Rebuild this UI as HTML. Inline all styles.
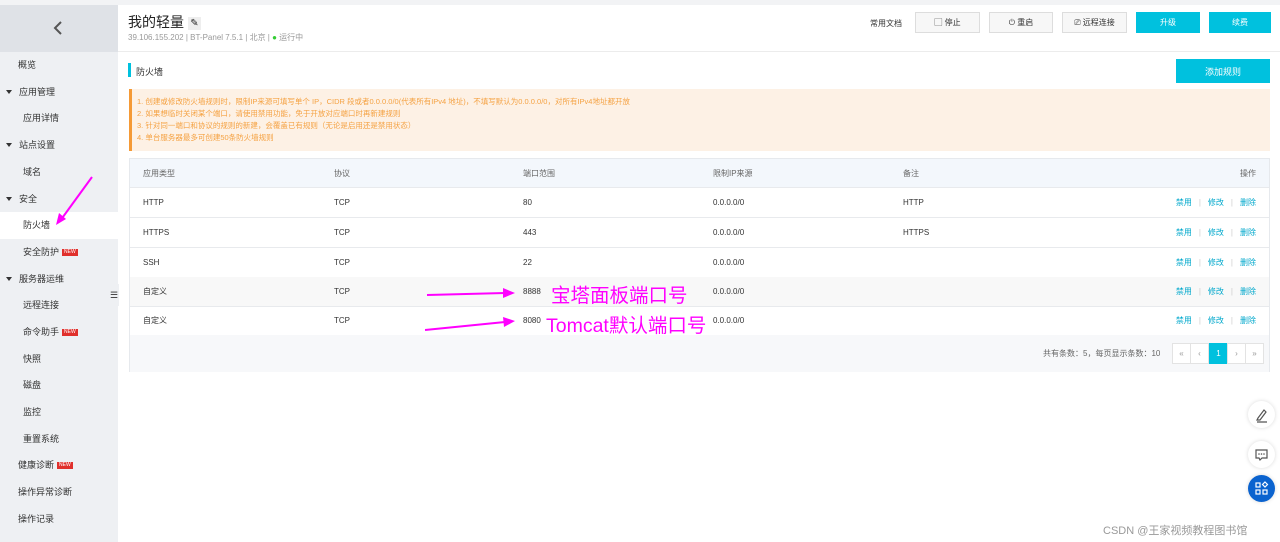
<!DOCTYPE html>
<html><head><meta charset="utf-8"><style>
*{margin:0;padding:0;box-sizing:border-box}
body{width:1280px;height:542px;overflow:hidden;background:#fff;font-family:"Liberation Sans","Noto Sans CJK SC",sans-serif;font-size:9px;color:#333;position:relative}
.a{position:absolute}
.top{left:0;top:0;width:1280px;height:5px;background:#f2f3f5}
.side{left:0;top:5px;width:118px;height:537px;background:#eef0f3}
.sh{left:0;top:5px;width:118px;height:47px;background:#dfe2e7}
.si{position:absolute;left:0;width:118px;height:27px;line-height:27px;font-size:9px;color:#333}
.new{display:inline-block;background:#e0302c;color:#fff;font-size:5px;line-height:7px;padding:0 2px;vertical-align:2px;margin-left:3px}
.tri{display:inline-block;width:0;height:0;border-left:3px solid transparent;border-right:3px solid transparent;border-top:4px solid #333;margin:0 7px 1px 6px}
.btn{top:12px;height:21px;border:1px solid #ddd;background:#f7f7f7;font-size:8px;line-height:19px;text-align:center;color:#333}
.cy{background:#00c1de;border-color:#00c1de;color:#fff}
.tbl{left:129px;top:158px;width:1141px;height:214px;border:1px solid #e6e9ed}
.row{position:absolute;left:0;width:1139px;height:30px;border-bottom:1px solid #e8eaed;font-size:8px;line-height:29px}
.row span{position:absolute}
.op{right:13px;color:#00a8cc}
.op i{font-style:normal;color:#ccc;margin:0 7px}
.pg{top:343px;width:19px;height:21px;border:1px solid #e3e3e3;background:#fff;text-align:center;line-height:19px;color:#999;font-size:8px}
.fab{width:27px;height:27px;border-radius:50%;background:#fff;box-shadow:0 0 4px rgba(0,0,0,.15);left:1248px}
.pink{color:#f0f;font-size:19.5px;font-family:"Liberation Sans","Noto Sans CJK SC",sans-serif}
</style></head><body>
<div class="a top"></div>
<div class="a side"></div>
<div class="a sh"></div>
<svg class="a" style="left:52px;top:20px" width="12" height="16"><path d="M9 2 L3 8 L9 14" stroke="#555" stroke-width="2" fill="none"/></svg>
<div class="si" style="top:52px;padding-left:18px">概览</div>
<div class="si" style="top:79px"><span class="tri"></span>应用管理</div>
<div class="si" style="top:105px;padding-left:23px">应用详情</div>
<div class="si" style="top:132px"><span class="tri"></span>站点设置</div>
<div class="si" style="top:159px;padding-left:23px">域名</div>
<div class="si" style="top:186px"><span class="tri"></span>安全</div>
<div class="si" style="top:212px;padding-left:23px;background:#fff">防火墙</div>
<div class="si" style="top:239px;padding-left:23px">安全防护<span class="new">NEW</span></div>
<div class="si" style="top:266px"><span class="tri"></span>服务器运维</div>
<div class="si" style="top:292px;padding-left:23px">远程连接</div>
<div class="si" style="top:319px;padding-left:23px">命令助手<span class="new">NEW</span></div>
<div class="si" style="top:346px;padding-left:23px">快照</div>
<div class="si" style="top:372px;padding-left:23px">磁盘</div>
<div class="si" style="top:399px;padding-left:23px">监控</div>
<div class="si" style="top:426px;padding-left:23px">重置系统</div>
<div class="si" style="top:452px;padding-left:18px">健康诊断<span class="new">NEW</span></div>
<div class="si" style="top:479px;padding-left:18px">操作异常诊断</div>
<div class="si" style="top:506px;padding-left:18px">操作记录</div>
<div class="a" style="left:110px;top:284px;width:9px;height:22px;background:#eef0f3;border-radius:4px 0 0 4px;font-size:9px;line-height:22px;color:#333">☰</div>
<svg class="a" style="left:52px;top:175px" width="42" height="52"><path d="M40 2 L8 46" stroke="#f0f" stroke-width="2"/><path d="M4 50 L7 38 L14 44Z" fill="#f0f"/></svg>

<div class="a" style="left:128px;top:12px;font-size:14px;color:#222">我的轻量 <span style="display:inline-block;width:13px;height:13px;background:#eee;font-size:10px;line-height:13px;text-align:center;vertical-align:1px">✎</span></div>
<div class="a" style="left:128px;top:32px;font-size:8px;color:#999">39.106.155.202 | BT-Panel 7.5.1 | 北京 | <span style="color:#3c3">●</span> 运行中</div>
<div class="a" style="left:870px;top:18px;font-size:8px">常用文档</div>
<div class="a btn" style="left:915px;width:65px">▢ 停止</div>
<div class="a btn" style="left:989px;width:64px">⏻ 重启</div>
<div class="a btn" style="left:1062px;width:65px">⎚ 远程连接</div>
<div class="a btn cy" style="left:1136px;width:64px">升级</div>
<div class="a btn cy" style="left:1209px;width:62px">续费</div>
<div class="a" style="left:118px;top:51px;width:1162px;height:1px;background:#ececec"></div>

<div class="a" style="left:128px;top:63px;width:3px;height:14px;background:#00c1de"></div>
<div class="a" style="left:136px;top:65px;font-size:9px">防火墙</div>
<div class="a btn cy" style="left:1176px;top:59px;height:24px;width:94px;line-height:24px;font-size:9px">添加规则</div>
<div class="a" style="left:129px;top:89px;width:1141px;height:62px;background:#fdf1e5;border-left:3px solid #f59a36;color:#f5a243;font-size:7.5px;line-height:12px;padding:7px 0 0 5px">
1. 创建或修改防火墙规则时，限制IP来源可填写单个 IP，CIDR 段或者0.0.0.0/0(代表所有IPv4 地址)，不填写默认为0.0.0.0/0，对所有IPv4地址都开放<br>
2. 如果想临时关闭某个端口，请使用禁用功能，免于开放对应端口时再新建规则<br>
3. 针对同一端口和协议的规则的新建，会覆盖已有规则（无论是启用还是禁用状态）<br>
4. 单台服务器最多可创建50条防火墙规则</div>

<div class="a tbl">
<div class="row" style="top:0;height:29px;background:#f3f7fc;color:#666"><span style="left:13px">应用类型</span><span style="left:204px">协议</span><span style="left:393px">端口范围</span><span style="left:583px">限制IP来源</span><span style="left:773px">备注</span><span style="right:13px">操作</span></div>
<div class="row" style="top:29px"><span style="left:13px">HTTP</span><span style="left:204px">TCP</span><span style="left:393px">80</span><span style="left:583px">0.0.0.0/0</span><span style="left:773px">HTTP</span><span class="op">禁用<i>|</i>修改<i>|</i>删除</span></div>
<div class="row" style="top:59px"><span style="left:13px">HTTPS</span><span style="left:204px">TCP</span><span style="left:393px">443</span><span style="left:583px">0.0.0.0/0</span><span style="left:773px">HTTPS</span><span class="op">禁用<i>|</i>修改<i>|</i>删除</span></div>
<div class="row" style="top:89px"><span style="left:13px">SSH</span><span style="left:204px">TCP</span><span style="left:393px">22</span><span style="left:583px">0.0.0.0/0</span><span class="op">禁用<i>|</i>修改<i>|</i>删除</span></div>
<div class="row" style="top:118px;background:#f8f8f8"><span style="left:13px">自定义</span><span style="left:204px">TCP</span><span style="left:393px">8888</span><span style="left:583px">0.0.0.0/0</span><span class="op">禁用<i>|</i>修改<i>|</i>删除</span></div>
<div class="row" style="top:147px"><span style="left:13px">自定义</span><span style="left:204px">TCP</span><span style="left:393px">8080</span><span style="left:583px">0.0.0.0/0</span><span class="op">禁用<i>|</i>修改<i>|</i>删除</span></div>
<div class="row" style="top:176px;height:37px;background:#f7f8fa;border:none"></div>
</div>
<div class="a" style="left:1043px;top:348px;font-size:8px;color:#666">共有条数：5，每页显示条数：10</div>
<div class="a pg" style="left:1172px">«</div>
<div class="a pg" style="left:1190px">‹</div>
<div class="a pg" style="left:1209px;background:#00c1de;border-color:#00c1de;color:#fff">1</div>
<div class="a pg" style="left:1227px">›</div>
<div class="a pg" style="left:1245px">»</div>

<svg class="a" style="left:425px;top:285px" width="90" height="50"><path d="M2 10 L80 8" stroke="#f0f" stroke-width="2"/><path d="M78 3 L90 8 L78 13Z" fill="#f0f"/><path d="M0 45 L80 37" stroke="#f0f" stroke-width="2"/><path d="M78 32 L90 36 L79 42Z" fill="#f0f"/></svg>
<div class="a pink" style="left:551px;top:279px">宝塔面板端口号</div>
<div class="a pink" style="left:546px;top:309px">Tomcat默认端口号</div>

<div class="a fab" style="top:401px"><svg width="27" height="27"><path d="M10 17 L16 9 L18 11 L12 19 L9 19Z M9 21 L19 21" stroke="#555" stroke-width="1.2" fill="none"/></svg></div>
<div class="a fab" style="top:441px"><svg width="27" height="27"><path d="M8 9 H19 V17 H14 L12 19 L11 17 H8Z" stroke="#555" stroke-width="1.2" fill="none"/><circle cx="11" cy="13" r=".8" fill="#555"/><circle cx="13.5" cy="13" r=".8" fill="#555"/><circle cx="16" cy="13" r=".8" fill="#555"/></svg></div>
<div class="a fab" style="top:475px;background:#0b63cf"><svg width="27" height="27"><g stroke="#fff" stroke-width="1.2" fill="none"><rect x="8" y="8" width="4" height="4"/><rect x="8" y="15" width="4" height="4"/><rect x="15" y="15" width="4" height="4"/><path d="M17 7 L19.5 9.5 L17 12 L14.5 9.5Z"/></g></svg></div>
<div class="a" style="left:1103px;top:522px;font-size:11px;color:#999">CSDN @王家视频教程图书馆</div>
</body></html>
